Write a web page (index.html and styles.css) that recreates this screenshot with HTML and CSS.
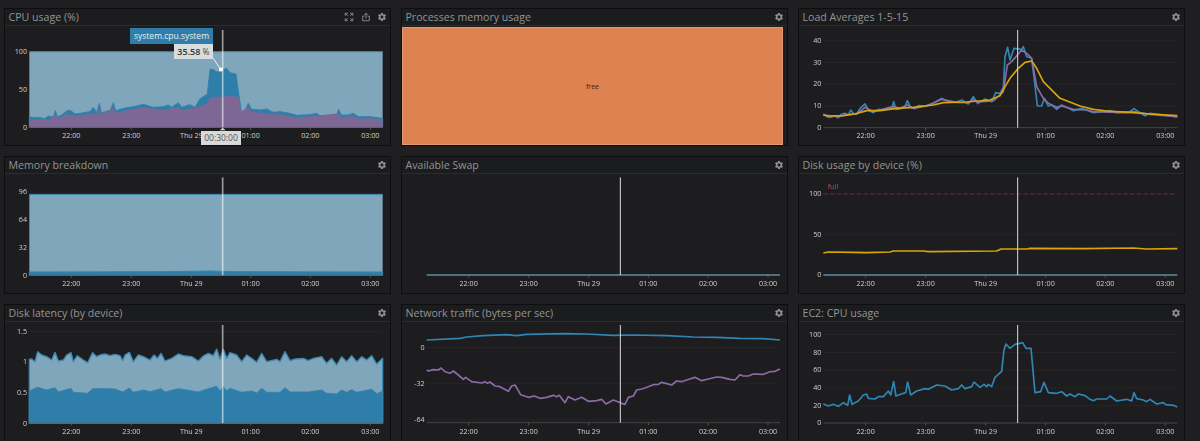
FILE: index.html
```html
<!DOCTYPE html>
<html lang="en">
<head>
<meta charset="utf-8">
<title>Dashboard</title>
<link rel="stylesheet" href="styles.css">
</head>
<body>
<svg class="defs" width="0" height="0" aria-hidden="true">
  <symbol id="gear" viewBox="0 0 24 24"><path d="M19.14 12.94c.04-.3.06-.61.06-.94 0-.32-.02-.64-.07-.94l2.03-1.58c.18-.14.23-.41.12-.61l-1.92-3.32c-.12-.22-.37-.29-.59-.22l-2.39.96c-.5-.38-1.03-.7-1.62-.94l-.36-2.54c-.04-.24-.24-.41-.48-.41h-3.84c-.24 0-.43.17-.47.41l-.36 2.54c-.59.24-1.13.57-1.62.94l-2.39-.96c-.22-.08-.47 0-.59.22L2.74 8.87c-.12.21-.08.47.12.61l2.03 1.58c-.05.3-.09.63-.09.94s.02.64.07.94l-2.03 1.58c-.18.14-.23.41-.12.61l1.92 3.32c.12.22.37.29.59.22l2.39-.96c.5.38 1.03.7 1.62.94l.36 2.54c.05.24.24.41.48.41h3.84c.24 0 .44-.17.47-.41l.36-2.54c.59-.24 1.13-.56 1.62-.94l2.39.96c.22.08.47 0 .59-.22l1.92-3.32c.12-.22.07-.47-.12-.61l-2.01-1.58zM12 15.6c-1.98 0-3.6-1.62-3.6-3.6s1.62-3.6 3.6-3.6 3.6 1.62 3.6 3.6-1.62 3.6-3.6 3.6z"/></symbol>
</svg>
<main class="grid">

<section class="panel">
  <header class="title"><h2>CPU usage (%)</h2>
    <div class="tools">
      <svg class="icon stroke" viewBox="0 0 24 24"><path d="M3 9V3h6M3 3l6 6M15 3h6v6M21 3l-6 6M3 15v6h6M3 21l6-6M21 15v6h-6M21 21l-6-6"/></svg>
      <svg class="icon stroke" viewBox="0 0 24 24"><path d="M8 10H4v11h16V10h-4M12 16V3M8 7l4-4 4 4"/></svg>
      <svg class="icon"><use href="#gear"/></svg>
    </div>
  </header>
  <svg class="chart" viewBox="15 78 1155 357">
    <rect class="light" x="88" y="155" width="1060" height="227"/>
    <line class="topline" x1="88" y1="155" x2="1148" y2="155"/>
    <polygon class="blue" points="88,382 88,350 100,353 115,352 135,356 145,348 160,352 166,332 172,350 185,345 200,333 210,330 225,342 240,340 270,335 280,322 290,338 298,310 304,338 330,332 340,308 347,332 370,325 400,320 430,313 460,322 490,320 505,315 515,322 535,308 545,322 570,314 585,322 600,296 622,282 630,208 640,208 650,216 680,205 690,218 708,222 716,280 724,335 735,332 745,310 755,328 780,330 800,327 820,337 840,335 870,340 890,346 930,344 950,340 960,347 1000,345 1010,345 1016,328 1024,345 1045,345 1060,340 1075,350 1110,350 1148,355 1148,382"/>
    <polygon class="purple" points="88,382 88,358 150,358 166,340 172,355 200,342 225,348 275,340 290,345 298,322 304,345 340,322 347,340 370,332 430,322 490,330 535,320 545,330 590,322 622,310 630,292 700,288 716,292 724,335 745,320 755,335 780,338 840,343 890,352 950,347 1016,340 1024,352 1060,348 1075,356 1110,355 1148,358 1148,382"/>
    <line class="axis" x1="88" y1="382" x2="1148" y2="382"/>
    <g class="ticks"><path d="M214 382v8M394 382v8M574 382v8M752 382v8M931 382v8M1111 382v8"/></g>
    <text class="yl" x="81" y="163">100</text><text class="yl" x="81" y="276">50</text><text class="yl" x="81" y="389">0</text>
    <text class="xl" x="214" y="414">22:00</text><text class="xl" x="394" y="414">23:00</text><text class="xl" x="574" y="414">Thu 29</text><text class="xl" x="752" y="414">01:00</text><text class="xl" x="931" y="414">02:00</text><text class="xl" x="1111" y="414">03:00</text>
    <line class="cross soft" x1="668" y1="90" x2="668" y2="382"/>
    <line class="leader" x1="640" y1="175" x2="662" y2="208"/>
    <rect class="dot" x="657" y="203" width="11" height="11"/>
    <polygon class="notch" points="668,383 659,391 677,391"/>
  </svg>
  <div class="tip-series">system.cpu.system</div>
  <div class="tip-value"><b>35.58</b> %</div>
  <div class="tip-time">00:30:00</div>
</section>

<section class="panel">
  <header class="title"><h2>Processes memory usage</h2><div class="tools"><svg class="icon"><use href="#gear"/></svg></div></header>
  <div class="pie"><span>free</span></div>
</section>

<section class="panel">
  <header class="title"><h2>Load Averages 1-5-15</h2><div class="tools"><svg class="icon"><use href="#gear"/></svg></div></header>
  <svg class="chart" viewBox="-3 78 1155 357">
    <path class="grid-line" d="M70 122H1132M70 187H1132M70 252H1132M70 318H1132"/>
    <line class="axis" x1="70" y1="383" x2="1132" y2="383"/>
    <g class="ticks"><path d="M197 383v8M377 383v8M557 383v8M737 383v8M916 383v8M1096 383v8"/></g>
    <text class="yl" x="64" y="129">40</text><text class="yl" x="64" y="194">30</text><text class="yl" x="64" y="259">20</text><text class="yl" x="64" y="325">10</text><text class="yl" x="64" y="390">0</text>
    <text class="xl" x="197" y="415">22:00</text><text class="xl" x="377" y="415">23:00</text><text class="xl" x="557" y="415">Thu 29</text><text class="xl" x="737" y="415">01:00</text><text class="xl" x="916" y="415">02:00</text><text class="xl" x="1096" y="415">03:00</text>
    <polyline class="ln ln-blue" points="70,342 80,350 90,352 105,348 115,353 125,342 135,340 145,345 152,330 160,340 170,342 180,325 195,312 205,330 220,338 235,328 250,330 265,323 275,325 281,305 288,328 305,325 315,320 322,302 332,322 345,326 355,317 375,318 400,310 425,295 445,305 470,306 485,300 505,312 520,290 533,311 555,297 575,305 587,278 600,280 610,262 615,170 623,142 630,180 642,145 665,148 670,140 680,170 695,175 703,240 712,318 725,318 733,295 745,318 755,315 770,328 785,315 800,322 820,332 845,325 880,338 930,332 950,338 985,338 1002,326 1015,335 1035,347 1050,340 1090,345 1132,351"/>
    <polyline class="ln ln-purple" points="70,345 115,350 150,342 170,342 195,322 220,335 280,320 300,325 322,315 340,325 380,318 425,298 470,307 505,308 520,298 533,306 580,303 610,275 622,195 635,185 665,150 680,160 695,175 710,260 730,295 745,310 770,322 785,318 820,328 860,330 880,335 950,337 1000,335 1050,343 1132,350"/>
    <polyline class="ln ln-yellow" points="70,345 85,348 130,347 165,342 200,332 240,332 290,325 340,322 400,315 430,308 500,306 570,300 600,287 615,260 630,235 655,205 675,187 695,183 710,205 730,245 780,295 840,318 880,328 920,333 1000,338 1050,342 1132,347"/>
    <line class="cross" x1="653" y1="90" x2="653" y2="383"/>
  </svg>
</section>

<section class="panel">
  <header class="title"><h2>Memory breakdown</h2><div class="tools"><svg class="icon"><use href="#gear"/></svg></div></header>
  <svg class="chart" viewBox="15 72 1155 357">
    <rect class="light" x="88" y="133" width="1060" height="243"/>
    <line class="topline" x1="88" y1="133" x2="1148" y2="133"/>
    <polygon class="blue" points="88,376 88,366 500,365 630,363 700,365 1148,366 1148,376"/>
    <line class="axis" x1="88" y1="376" x2="1148" y2="376"/>
    <g class="ticks"><path d="M214 376v8M394 376v8M574 376v8M752 376v8M931 376v8M1111 376v8"/></g>
    <text class="yl" x="81" y="131">96</text><text class="yl" x="81" y="217">64</text><text class="yl" x="81" y="300">32</text><text class="yl" x="81" y="383">0</text>
    <text class="xl" x="214" y="407">22:00</text><text class="xl" x="394" y="407">23:00</text><text class="xl" x="574" y="407">Thu 29</text><text class="xl" x="752" y="407">01:00</text><text class="xl" x="931" y="407">02:00</text><text class="xl" x="1111" y="407">03:00</text>
    <line class="cross soft" x1="668" y1="82" x2="668" y2="376"/>
  </svg>
</section>

<section class="panel">
  <header class="title"><h2>Available Swap</h2><div class="tools"><svg class="icon"><use href="#gear"/></svg></div></header>
  <svg class="chart" viewBox="6 72 1155 357">
    <g class="ticks"><path d="M206 375v8M386 375v8M566 375v8M745 375v8M924 375v8M1104 375v8"/></g>
    <line class="flat" x1="80" y1="375" x2="1140" y2="375"/>
    <text class="xl" x="206" y="407">22:00</text><text class="xl" x="386" y="407">23:00</text><text class="xl" x="566" y="407">Thu 29</text><text class="xl" x="745" y="407">01:00</text><text class="xl" x="924" y="407">02:00</text><text class="xl" x="1104" y="407">03:00</text>
    <line class="cross" x1="661" y1="82" x2="661" y2="375"/>
  </svg>
</section>

<section class="panel">
  <header class="title"><h2>Disk usage by device (%)</h2><div class="tools"><svg class="icon"><use href="#gear"/></svg></div></header>
  <svg class="chart" viewBox="-3 72 1155 357">
    <path class="grid-line" d="M70 254H1132"/>
    <line class="threshold" x1="70" y1="132" x2="1132" y2="132"/>
    <text class="full" x="83" y="118">full</text>
    <g class="ticks"><path d="M197 375v8M377 375v8M557 375v8M737 375v8M916 375v8M1096 375v8"/></g>
    <text class="yl" x="64" y="139">100</text><text class="yl" x="64" y="261">50</text><text class="yl" x="64" y="382">0</text>
    <text class="xl" x="197" y="407">22:00</text><text class="xl" x="377" y="407">23:00</text><text class="xl" x="557" y="407">Thu 29</text><text class="xl" x="737" y="407">01:00</text><text class="xl" x="916" y="407">02:00</text><text class="xl" x="1096" y="407">03:00</text>
    <polyline class="ln ln-yellow" points="70,309 85,306 160,307 200,308 270,306 280,303 370,303 385,305 590,303 603,297 680,297 690,295 850,296 1000,294 1040,297 1132,296"/>
    <line class="flat" x1="70" y1="375" x2="1132" y2="375"/>
    <line class="cross" x1="653" y1="82" x2="653" y2="375"/>
  </svg>
</section>

<section class="panel">
  <header class="title"><h2>Disk latency (by device)</h2><div class="tools"><svg class="icon"><use href="#gear"/></svg></div></header>
  <svg class="chart" viewBox="15 96 1155 357">
    <path class="grid-line" d="M88 124H1148"/>
    <polygon class="light edged" points="88,399 88,208 95,207 105,215 113,185 125,195 140,200 155,210 165,187 175,213 190,210 200,195 213,188 220,215 232,197 250,210 263,218 278,188 290,200 300,195 315,192 330,197 345,193 360,197 368,212 375,195 388,187 400,215 415,195 430,200 450,210 462,195 472,205 483,190 495,213 515,205 535,192 550,197 575,200 595,213 610,198 625,190 640,197 650,177 660,207 670,178 680,205 690,188 710,195 725,215 740,195 755,205 770,217 785,190 800,215 830,208 840,215 855,185 870,212 885,207 910,205 925,212 940,205 965,200 980,220 995,205 1010,225 1025,200 1040,215 1055,197 1070,215 1085,200 1100,210 1115,197 1130,222 1148,205 1148,399"/>
    <polygon class="blue" points="88,399 88,303 113,292 140,300 165,293 175,306 213,295 220,307 263,310 278,296 315,296 345,297 368,306 388,294 400,307 430,300 450,305 483,296 495,306 535,296 595,306 625,296 650,289 660,303 670,290 680,302 690,295 725,307 755,303 770,309 785,295 800,307 840,307 855,293 870,306 925,306 965,300 980,310 1010,312 1025,300 1040,307 1055,299 1070,307 1115,298 1130,311 1148,304 1148,399"/>
    <line class="axis" x1="88" y1="399" x2="1148" y2="399"/>
    <g class="ticks"><path d="M214 399v8M394 399v8M574 399v8M752 399v8M931 399v8M1111 399v8"/></g>
    <text class="yl" x="81" y="131">1.5</text><text class="yl" x="81" y="222">1</text><text class="yl" x="81" y="314">0.5</text><text class="yl" x="81" y="407">0</text>
    <text class="xl" x="214" y="431">22:00</text><text class="xl" x="394" y="431">23:00</text><text class="xl" x="574" y="431">Thu 29</text><text class="xl" x="752" y="431">01:00</text><text class="xl" x="931" y="431">02:00</text><text class="xl" x="1111" y="431">03:00</text>
    <line class="cross soft" x1="668" y1="105" x2="668" y2="399"/>
  </svg>
</section>

<section class="panel">
  <header class="title"><h2>Network traffic (bytes per sec)</h2><div class="tools"><svg class="icon"><use href="#gear"/></svg></div></header>
  <svg class="chart" viewBox="6 96 1155 357">
    <path class="grid-line" d="M80 172H1140M80 281H1140M80 390H1140"/>
    <line class="axis" x1="80" y1="398" x2="1140" y2="398"/>
    <g class="ticks"><path d="M206 398v8M386 398v8M566 398v8M745 398v8M924 398v8M1104 398v8"/></g>
    <text class="yl" x="74" y="179">0</text><text class="yl" x="74" y="288">-32</text><text class="yl" x="74" y="397">-64</text>
    <text class="xl" x="206" y="431">22:00</text><text class="xl" x="386" y="431">23:00</text><text class="xl" x="566" y="431">Thu 29</text><text class="xl" x="745" y="431">01:00</text><text class="xl" x="924" y="431">02:00</text><text class="xl" x="1104" y="431">03:00</text>
    <polyline class="ln ln-blue" points="80,150 180,145 200,141 250,137 320,134 350,137 380,133 490,131 560,132 640,136 700,135 800,137 880,141 950,142 1020,145 1090,146 1140,150"/>
    <polyline class="ln ln-purple" points="80,240 85,243 100,239 115,240 123,234 135,245 150,250 160,243 175,255 190,268 197,262 215,275 245,279 255,275 262,280 270,276 285,288 300,290 325,304 335,288 345,285 362,314 385,322 403,318 420,325 440,322 460,316 470,320 478,316 495,338 505,320 525,330 545,322 565,334 590,332 605,328 618,342 640,330 665,340 675,343 685,322 700,318 710,300 725,297 735,294 760,284 775,283 785,277 800,281 815,285 830,273 845,275 860,270 885,262 905,272 925,267 950,261 965,262 990,268 1005,270 1020,254 1030,258 1045,258 1060,252 1090,253 1110,245 1125,244 1140,237"/>
    <line class="cross" x1="661" y1="105" x2="661" y2="398"/>
  </svg>
</section>

<section class="panel">
  <header class="title"><h2>EC2: CPU usage</h2><div class="tools"><svg class="icon"><use href="#gear"/></svg></div></header>
  <svg class="chart" viewBox="-3 96 1155 357">
    <path class="grid-line" d="M70 133H1132M70 187H1132M70 240H1132M70 293H1132M70 346H1132"/>
    <line class="axis" x1="70" y1="399" x2="1132" y2="399"/>
    <g class="ticks"><path d="M197 399v8M377 399v8M557 399v8M737 399v8M916 399v8M1096 399v8"/></g>
    <text class="yl" x="64" y="140">100</text><text class="yl" x="64" y="194">80</text><text class="yl" x="64" y="247">60</text><text class="yl" x="64" y="300">40</text><text class="yl" x="64" y="353">20</text><text class="yl" x="64" y="406">0</text>
    <text class="xl" x="197" y="431">22:00</text><text class="xl" x="377" y="431">23:00</text><text class="xl" x="557" y="431">Thu 29</text><text class="xl" x="737" y="431">01:00</text><text class="xl" x="916" y="431">02:00</text><text class="xl" x="1096" y="431">03:00</text>
    <polyline class="ln ln-blue" points="70,342 85,348 100,343 115,349 130,338 143,346 149,315 156,343 175,333 190,315 200,312 205,325 225,327 235,320 250,320 265,303 272,315 281,275 288,318 310,310 317,308 323,276 332,315 350,303 375,296 385,298 410,285 435,288 455,300 475,296 485,285 495,296 515,290 522,276 540,292 552,283 560,290 565,283 575,290 585,262 605,244 612,180 618,162 630,175 645,163 668,158 678,175 693,175 705,308 722,305 732,277 745,308 770,310 785,305 800,318 810,312 825,320 835,312 855,317 870,328 880,332 890,327 920,327 930,318 950,333 980,328 995,333 1002,308 1010,326 1030,330 1040,335 1050,328 1070,342 1090,338 1098,344 1120,346 1132,351"/>
    <line class="cross" x1="653" y1="105" x2="653" y2="399"/>
  </svg>
</section>

</main>
</body>
</html>
```
FILE: styles.css
```css
* { box-sizing: border-box; }
html, body { height: 100%; margin: 0; overflow: hidden; }
body { background: #1f1f21; font-family: "Open Sans", "Noto Sans", sans-serif; }
.defs { position: absolute; }

.grid {
  display: grid;
  grid-template-columns: repeat(3, 387px);
  grid-auto-rows: 138px;
  gap: 10px;
  padding: 8px 0 0 4px;
  filter: blur(0.5px);
}

.panel {
  position: relative;
  display: flex;
  flex-direction: column;
  background: #1d1d1f;
  border: 1px solid #0e0e10;
  min-width: 0;
}
.title {
  flex: none;
  height: 17px;
  display: flex;
  align-items: center;
  justify-content: space-between;
  padding: 0 3px 0 3.5px;
  background: #1b1c1e;
  border-bottom: 1px solid #2c2c2e;
}
.title h2 {
  margin: 0;
  font-size: 10.6px;
  font-weight: 400;
  color: #949494;
  white-space: nowrap;
}
.tools { display: flex; gap: 6.5px; }
.icon { display: block; width: 10px; height: 10px; fill: #909090; }
.icon.stroke { fill: none; stroke: #909090; stroke-width: 2.2; }

.chart { flex: 1; display: block; width: 100%; min-height: 0; overflow: hidden; }
.chart text { font-family: "Open Sans", "Noto Sans", sans-serif; font-size: 21.5px; fill: #d0d0d0; }
.chart .yl { text-anchor: end; }
.chart .xl { text-anchor: middle; }
.chart .full { fill: #c4485f; font-size: 22px; }

.light { fill: #7fa6ba; }
.edged { stroke: #3a88b5; stroke-width: 4; stroke-linejoin: round; }
.blue { fill: #2f7ea9; stroke: #3484b0; stroke-width: 3; stroke-linejoin: round; }
.purple { fill: #7d6795; }
.topline { stroke: #3a88b5; stroke-width: 3; }
.axis { stroke: #5a5a5c; stroke-width: 2; }
.ticks path { stroke: #6a6a6a; stroke-width: 2; fill: none; }
.grid-line { stroke: #2a2a2c; stroke-width: 2; fill: none; }
.ln { fill: none; stroke-width: 5; stroke-linejoin: round; }
.ln-blue { stroke: #2f86b5; }
.ln-purple { stroke: #8a6ba6; }
.ln-yellow { stroke: #d6a50f; }
.flat { stroke: #5d8ca3; stroke-width: 4; }
.threshold { stroke: #6d2a3c; stroke-width: 3; stroke-dasharray: 14 6; }
.cross { stroke: #dcdcdc; stroke-width: 3; }
.cross.soft { stroke: rgba(255, 255, 255, 0.55); stroke-width: 5; }
.leader { stroke: #f2f2f2; stroke-width: 3; }
.dot { fill: #fff; }
.notch { fill: #d9d9d9; }

.pie {
  flex: 1;
  margin: 1px 4px 0 0;
  display: flex;
  align-items: center;
  justify-content: center;
  background: #dd8250;
  border: 1px solid #e49a70;
  font-size: 7px;
  color: #3d2417;
}

.tip-series, .tip-value, .tip-time { position: absolute; white-space: nowrap; text-align: center; }
.tip-series {
  left: 125px; top: 18.5px;
  width: 83px; height: 16px;
  line-height: 15px;
  background: #2f7ea9;
  color: #e8f0f4;
  font-size: 8.5px;
}
.tip-value {
  left: 169px; top: 34.5px;
  width: 39px; height: 15px;
  line-height: 15px;
  background: #d8dde0;
  color: #444;
  font-size: 8.5px;
}
.tip-value b { font-weight: 600; font-size: 9px; color: #333; }
.tip-time {
  left: 196px; top: 121.5px;
  width: 40px; height: 14px;
  line-height: 14px;
  background: #d9d9d9;
  color: #555;
  font-size: 8.5px;
}
```
